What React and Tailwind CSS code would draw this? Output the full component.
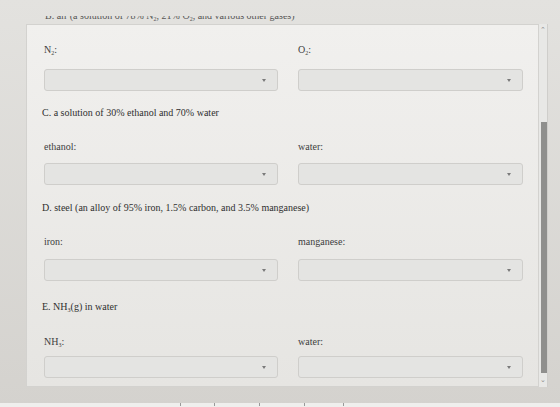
import React from 'react';

// dropdown box with the small caret on the right
const Select = ({ className = '' }) => (
  <div className={`h-[22px] rounded-[3px] border border-[#cfcecb] bg-[#e4e4e2] flex items-center justify-end pr-[11px] ${className}`}>
    <span className="w-0 h-0 border-l-[2px] border-r-[2px] border-t-[3px] border-l-transparent border-r-transparent border-t-[#7a7a7a]" />
  </div>
);

const Label = ({ children }) => (
  <div className="h-[14px] leading-[14px] text-[10px] text-[#3d3d3d]">{children}</div>
);

const Heading = ({ children, className = '' }) => (
  <div className={`h-[14px] leading-[14px] text-[10px] text-[#2f2f2f] -ml-[2px] ${className}`}>{children}</div>
);

const Sub = ({ children }) => <sub className="text-[6px] leading-none">{children}</sub>;

// one row of two labelled dropdowns
const FieldRow = ({ left, right, top, gap }) => (
  <div className={`grid grid-cols-[234px_225px] gap-x-[20px] ${top}`}>
    <div className="flex flex-col">
      <Label>{left}</Label>
      <Select className={gap} />
    </div>
    <div className="flex flex-col">
      <Label>{right}</Label>
      <Select className={gap} />
    </div>
  </div>
);

export default function App() {
  return (
    <div className="w-[560px] h-[407px] overflow-hidden flex flex-col bg-linear-to-b from-[#e3e2df] to-[#d4d2ce] font-['Liberation_Serif','Times_New_Roman',serif]">
      {/* previous question, scrolled mostly out of view */}
      <div className="h-[24px] flex flex-col shrink-0">
        <div className="h-[16px]" />
        <div className="h-[6px] overflow-hidden pl-[45px]">
          <div className="-mt-[6px] leading-[12px] text-[10px] text-[#555] whitespace-nowrap">
            B. air (a solution of 78% N<Sub>2</Sub>, 21% O<Sub>2</Sub>, and various other gases)
          </div>
        </div>
      </div>

      <div className="flex">
        <div className="w-[26px] shrink-0" />
        {/* question panel */}
        <div className="w-[513px] h-[363px] shrink-0 border border-[#d3d2cf] bg-linear-to-b from-[#f1f0ee] to-[#e6e5e2] pl-[17px] pr-[15px] pt-[18px]">
          <FieldRow left={<>N<Sub>2</Sub>:</>} right={<>O<Sub>2</Sub>:</>} top="" gap="mt-[12px]" />

          <Heading className="mt-[15px]">C. a solution of 30% ethanol and 70% water</Heading>
          <FieldRow left="ethanol:" right="water:" top="mt-[20px]" gap="mt-[9px]" />

          <Heading className="mt-[16px]">D. steel (an alloy of 95% iron, 1.5% carbon, and 3.5% manganese)</Heading>
          <FieldRow left="iron:" right="manganese:" top="mt-[20px]" gap="mt-[10px]" />

          <Heading className="mt-[19px]">E. NH<Sub>3</Sub>(g) in water</Heading>
          <FieldRow left={<>NH<Sub>3</Sub>:</>} right="water:" top="mt-[21px]" gap="mt-[7px]" />
        </div>

        {/* scrollbar */}
        <div className="w-[9px] h-[363px] shrink-0 flex flex-col bg-[#e8e8e6] border-r border-[#cfcecb]">
          <div className="h-[12px] flex items-center justify-center text-[7px] leading-none text-[#8a8a8a]">⌃</div>
          <div className="h-[86px]" />
          <div className="h-[251px] ml-[2px] bg-[#8f8f8d]" />
          <div className="flex-1 flex items-center justify-center text-[7px] leading-none text-[#8a8a8a]">⌄</div>
        </div>
      </div>

      <div className="flex-1" />
      {/* edge of the window below */}
      <div className="h-[4px] shrink-0 bg-[#efefed] flex items-start">
        <div className="w-[180px]" />
        <div className="w-px h-[3px] bg-[#999]" />
        <div className="w-[33px]" />
        <div className="w-px h-[3px] bg-[#999]" />
        <div className="w-[44px]" />
        <div className="w-px h-[3px] bg-[#999]" />
        <div className="w-[44px]" />
        <div className="w-px h-[3px] bg-[#999]" />
        <div className="w-[38px]" />
        <div className="w-px h-[3px] bg-[#999]" />
      </div>
    </div>
  );
}
